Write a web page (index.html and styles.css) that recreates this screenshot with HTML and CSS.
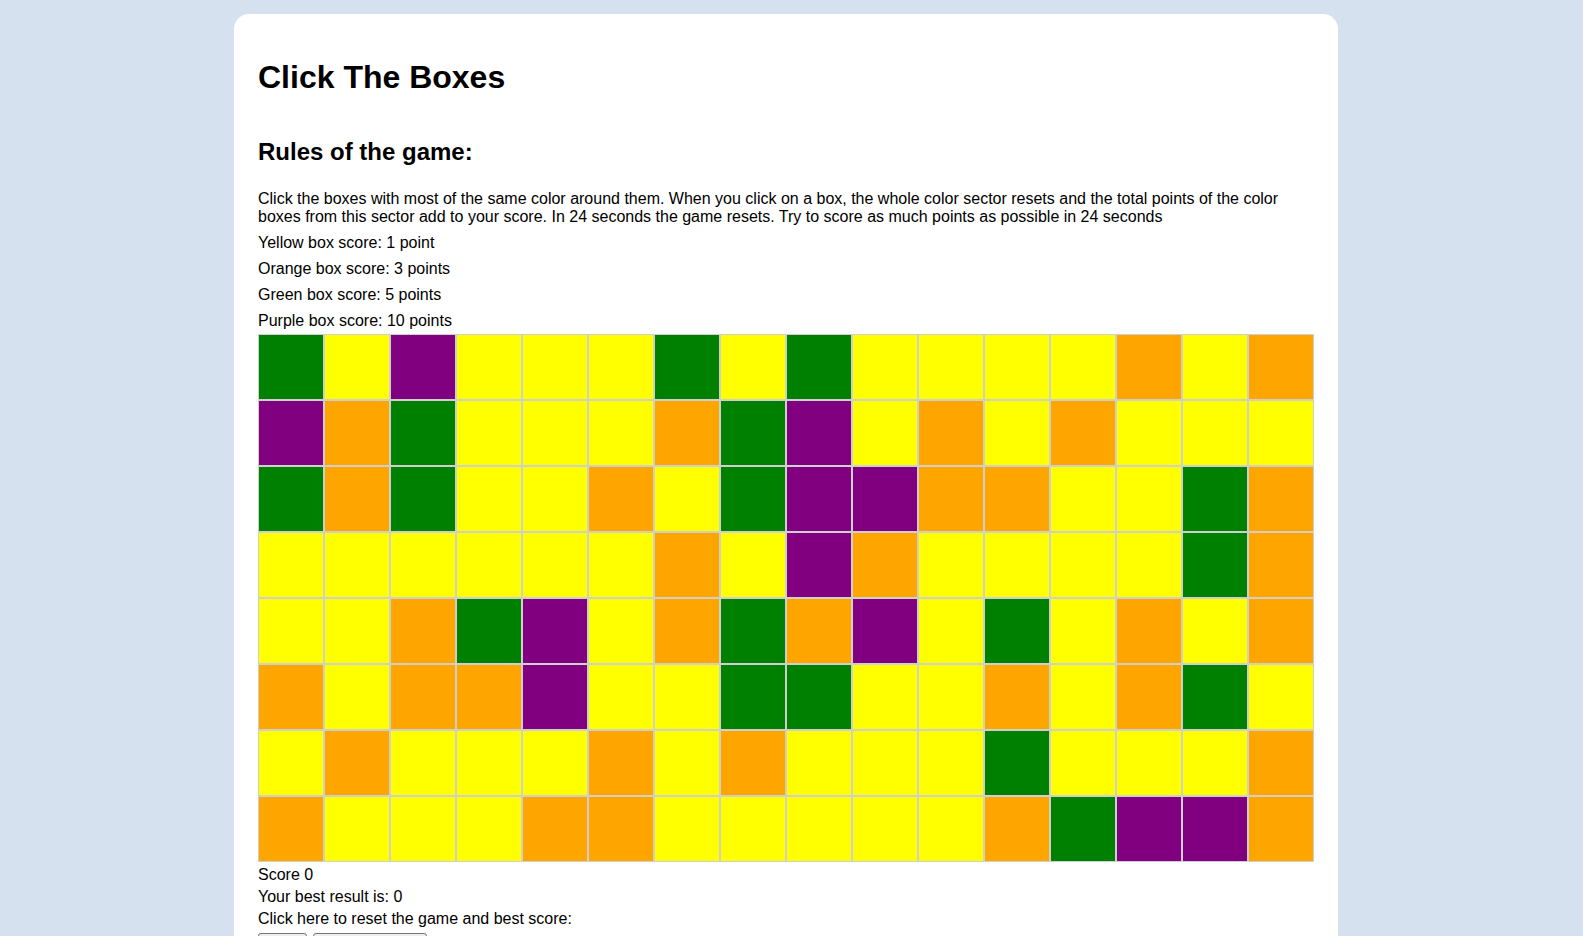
FILE: index.html
```html
<!DOCTYPE html>
<html lang="en">
<head>
<meta charset="utf-8">
<title>Click The Boxes</title>
<link rel="stylesheet" href="styles.css">
</head>
<body>
<main class="card">
  <h1 class="title">Click The Boxes</h1>
  <h2 class="subtitle">Rules of the game:</h2>
  <p class="rules">Click the boxes with most of the same color around them. When you click on a box, the whole color sector resets and the total points of the color boxes from this sector add to your score. In 24 seconds the game resets. Try to score as much points as possible in 24 seconds</p>
  <p class="points">Yellow box score: 1 point</p>
  <p class="points">Orange box score: 3 points</p>
  <p class="points">Green box score: 5 points</p>
  <p class="points last">Purple box score: 10 points</p>
  <div class="board" id="board"></div>
  <div class="info first">Score 0</div>
  <div class="info">Your best result is: 0</div>
  <div class="info">Click here to reset the game and best score:</div>
  <div class="buttons">
    <button class="btn">Reset</button>
    <button class="btn">Reset best score</button>
  </div>
</main>
<script>
  var rows = [
    "GYPYYYGYGYYYYOYO",
    "POGYYYOGPYOYOYYY",
    "GOGYYOYGPPOOYYGO",
    "YYYYYYOYPOYYYYGO",
    "YYOGPYOGOPYGYOYO",
    "OYOOPYYGGYYOYOGY",
    "YOYYYOYOYYYGYYYO",
    "OYYYOOYYYYYOGPPO"
  ];
  var names = {G: "green", Y: "yellow", P: "purple", O: "orange"};
  var board = document.getElementById("board");
  rows.forEach(function (r) {
    for (var i = 0; i < r.length; i++) {
      var d = document.createElement("div");
      d.className = "box " + names[r[i]];
      board.appendChild(d);
    }
  });
</script>
</body>
</html>
```
FILE: styles.css
```css
html, body {
  margin: 0;
  padding: 0;
}
body {
  background: #d5e1ef;
  font-family: "Liberation Sans", Arial, sans-serif;
  color: #000;
  padding-top: 14px;
}
.card {
  box-sizing: border-box;
  width: 1104px;
  margin-left: 234px;
  background: #fff;
  border-radius: 15px;
  padding: 24px 24px 40px;
}
.title {
  margin: 21px 0 0;
  font-size: 32px;
  line-height: 37px;
  font-weight: bold;
}
.subtitle {
  margin: 42px 0 0;
  font-size: 24px;
  line-height: 28px;
  font-weight: bold;
}
.rules {
  margin: 24px 0 8px;
  font-size: 16px;
  line-height: 18px;
}
.points {
  margin: 0 0 8px;
  font-size: 16px;
  line-height: 18px;
}
.points.last {
  margin-bottom: 4px;
}
.board {
  display: grid;
  grid-template-columns: repeat(16, 66px);
  grid-auto-rows: 66px;
  width: 1056px;
}
.box {
  box-sizing: border-box;
  border: 1px solid #cfcfcf;
}
.green { background: #008000; }
.yellow { background: #ffff00; }
.purple { background: #800080; }
.orange { background: #ffa500; }
.info {
  font-size: 16px;
  line-height: 22px;
}
.info.first {
  margin-top: 2px;
}
.buttons {
  display: flex;
  gap: 6px;
  margin-top: 3px;
}
.btn {
  font-family: "Liberation Sans", Arial, sans-serif;
  font-size: 13.33px;
  padding: 2px 6px;
  border: 1px solid #767676;
  border-radius: 3px;
  background: #efefef;
  color: #000;
}
```
